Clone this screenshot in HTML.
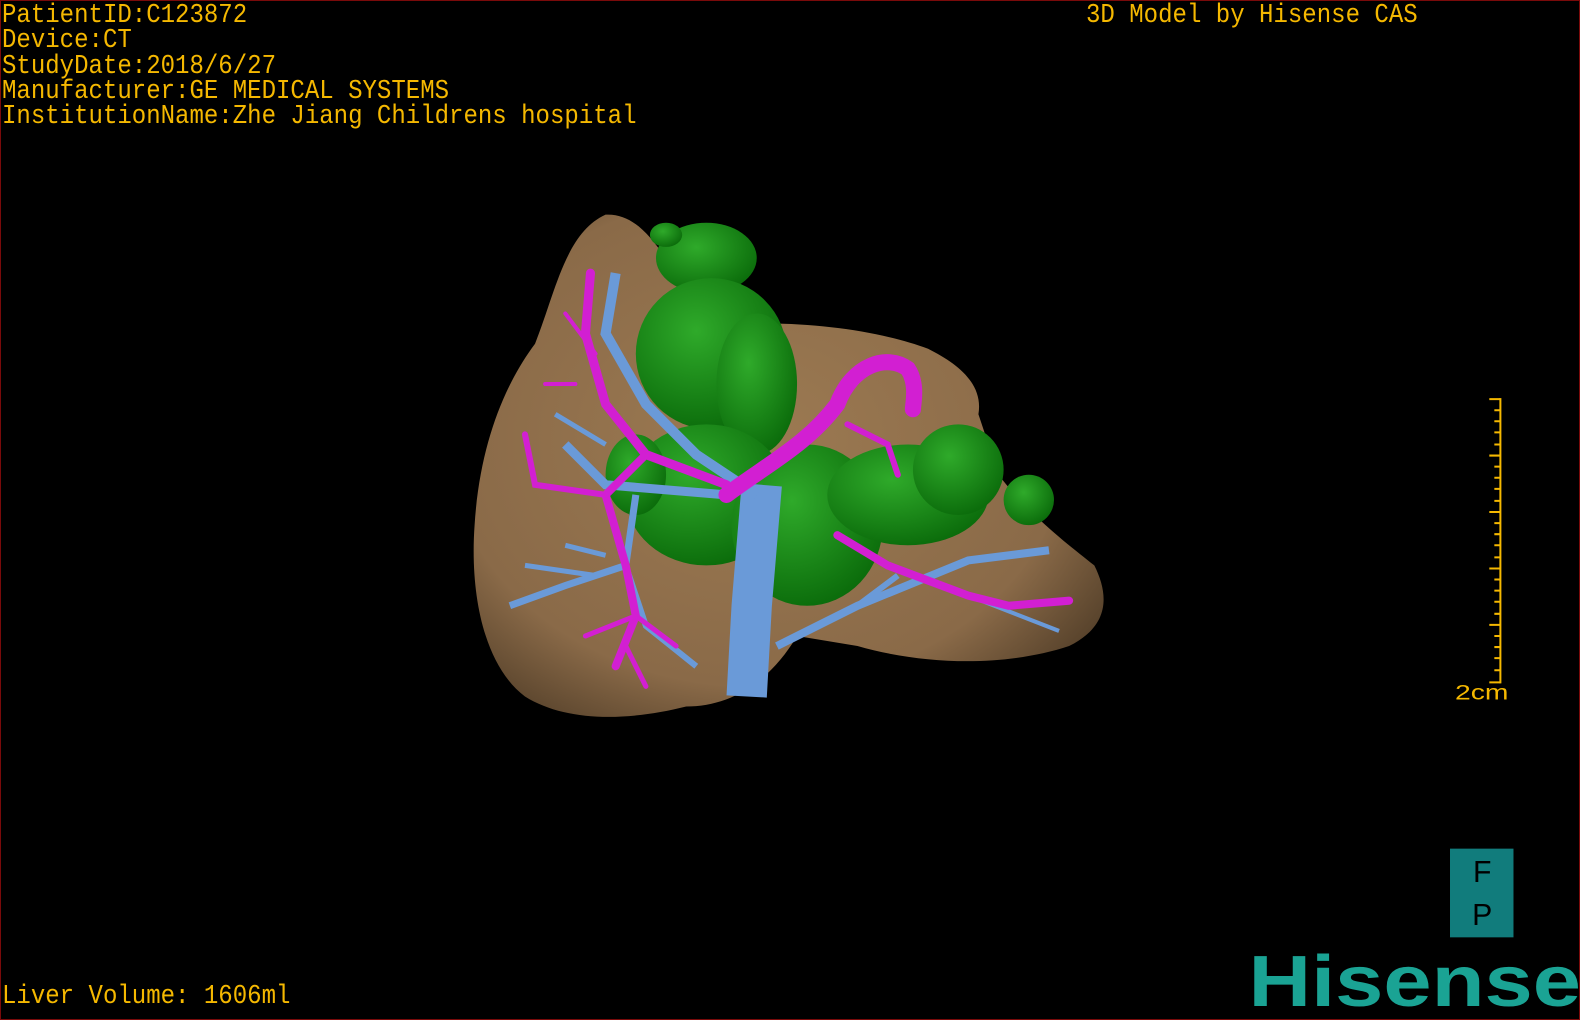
<!DOCTYPE html>
<html><head><meta charset="utf-8"><style>
html,body{margin:0;padding:0;background:#000;width:1580px;height:1020px;overflow:hidden}
.wrap{position:relative;width:1580px;height:1020px;box-sizing:border-box;border:1px solid #7a0a0a;background:#000}
.t{position:absolute;color:#f5b800;font-family:"Liberation Mono",monospace;font-size:27px;line-height:25.3px;white-space:pre;letter-spacing:0;transform:scaleX(0.89);transform-origin:left top}
svg{position:absolute;left:0;top:0}
</style></head><body><div class="wrap">
<svg width="1580" height="1020" viewBox="0 0 1568 1012" preserveAspectRatio="none">
<defs>
<radialGradient id="lv" cx="0.45" cy="0.45" r="0.7"><stop offset="0" stop-color="#9c7a52"/><stop offset="0.7" stop-color="#8a6a48"/><stop offset="1" stop-color="#4a3824"/></radialGradient>
<radialGradient id="gr" cx="0.4" cy="0.35" r="0.7"><stop offset="0" stop-color="#2faa2a"/><stop offset="1" stop-color="#0a6a0a"/></radialGradient>
</defs>
<path d="M600 212 C640 210 660 260 690 300 L760 320 C820 320 880 330 920 345 C950 360 975 380 970 410 L990 470 C1020 510 1060 540 1085 560 C1100 590 1100 620 1060 640 C1000 660 920 660 850 640 L790 630 C760 680 720 700 680 700 C620 715 560 715 520 690 C480 660 465 590 470 520 C475 440 500 380 530 340 C550 290 560 230 600 212Z" fill="url(#lv)"/>
<g fill="url(#gr)">
<ellipse cx="700" cy="255" rx="50" ry="35"/>
<ellipse cx="660" cy="232" rx="16" ry="12"/>
<ellipse cx="705" cy="350" rx="75" ry="75"/>
<ellipse cx="750" cy="380" rx="40" ry="70"/>
<ellipse cx="700" cy="490" rx="80" ry="70"/>
<ellipse cx="800" cy="520" rx="75" ry="80"/>
<ellipse cx="900" cy="490" rx="80" ry="50"/>
<ellipse cx="950" cy="465" rx="45" ry="45"/>
<ellipse cx="1020" cy="495" rx="25" ry="25"/>
<ellipse cx="630" cy="470" rx="30" ry="40"/>
</g>
<g fill="none" stroke="#6a9ad8" stroke-linecap="butt">
<path d="M740 690 L745 600 L755 480" stroke-width="40"/>
<path d="M750 490 L690 450 L640 400 L600 330 L610 270" stroke-width="10"/>
<path d="M720 490 L600 480 L560 440" stroke-width="9"/>
<path d="M630 490 L620 560 L560 580 L505 600" stroke-width="7"/>
<path d="M620 560 L640 620 L690 660" stroke-width="6"/>
<path d="M770 640 L850 600 L960 555 L1040 545" stroke-width="8"/>
<path d="M850 600 L890 570" stroke-width="6"/>
<path d="M960 590 L1050 625" stroke-width="4"/>
<path d="M560 540 L600 550 M550 410 L600 440 M520 560 L590 570" stroke-width="5"/>
</g>
<g fill="none" stroke="#d21fd2" stroke-linecap="round">
<path d="M720 490 C760 460 800 440 830 400 C845 360 880 350 900 365 C910 380 905 400 905 405" stroke-width="16"/>
<path d="M720 480 L640 450 L600 400 L580 330 L585 270" stroke-width="9"/>
<path d="M640 450 L600 490 L620 560 L630 610 L610 660" stroke-width="8"/>
<path d="M600 490 L530 480 L520 430" stroke-width="6"/>
<path d="M630 610 L580 630 M630 610 L670 640 M620 640 L640 680" stroke-width="5"/>
<path d="M830 530 L880 560 L960 590 L1000 600 L1060 595" stroke-width="8"/>
<path d="M840 420 L880 440 L890 470" stroke-width="6"/>
<path d="M570 380 L540 380 M590 350 L560 310" stroke-width="4"/>
</g>
<g stroke="#f5b800" stroke-width="2">
<line x1="1488" y1="394" x2="1488" y2="677"/>
<path d="M1477 395H1488M1477 451H1488M1477 507H1488M1477 563H1488M1477 619H1488M1477 676H1488"/>
<path d="M1482 406H1488M1482 417H1488M1482 428H1488M1482 440H1488M1482 462H1488M1482 473H1488M1482 484H1488M1482 496H1488M1482 518H1488M1482 529H1488M1482 540H1488M1482 552H1488M1482 574H1488M1482 585H1488M1482 596H1488M1482 608H1488M1482 630H1488M1482 641H1488M1482 652H1488M1482 664H1488"/>
</g>
<text x="1443" y="693" fill="#f5b800" font-family="Liberation Sans, sans-serif" font-size="21" textLength="53" lengthAdjust="spacingAndGlyphs">2cm</text>
<rect x="1438" y="841" width="63" height="88" fill="#117c7c"/>
<text x="1470" y="874" fill="#000" font-family="Liberation Sans, sans-serif" font-size="30" text-anchor="middle">F</text>
<text x="1470" y="917" fill="#000" font-family="Liberation Sans, sans-serif" font-size="30" text-anchor="middle">P</text>
<text x="1238" y="997" fill="#1aa394" font-family="Liberation Sans, sans-serif" font-weight="bold" font-size="72" textLength="330" lengthAdjust="spacingAndGlyphs">Hisense</text>
</svg>
<div class="t" style="left:1px;top:3px">PatientID:C123872
Device:CT
StudyDate:2018/6/27
Manufacturer:GE MEDICAL SYSTEMS
InstitutionName:Zhe Jiang Childrens hospital</div>
<div class="t" style="left:1085px;top:3px">3D Model by Hisense CAS</div>
<div class="t" style="left:1px;top:984px">Liver Volume: 1606ml</div>
</div></body></html>
